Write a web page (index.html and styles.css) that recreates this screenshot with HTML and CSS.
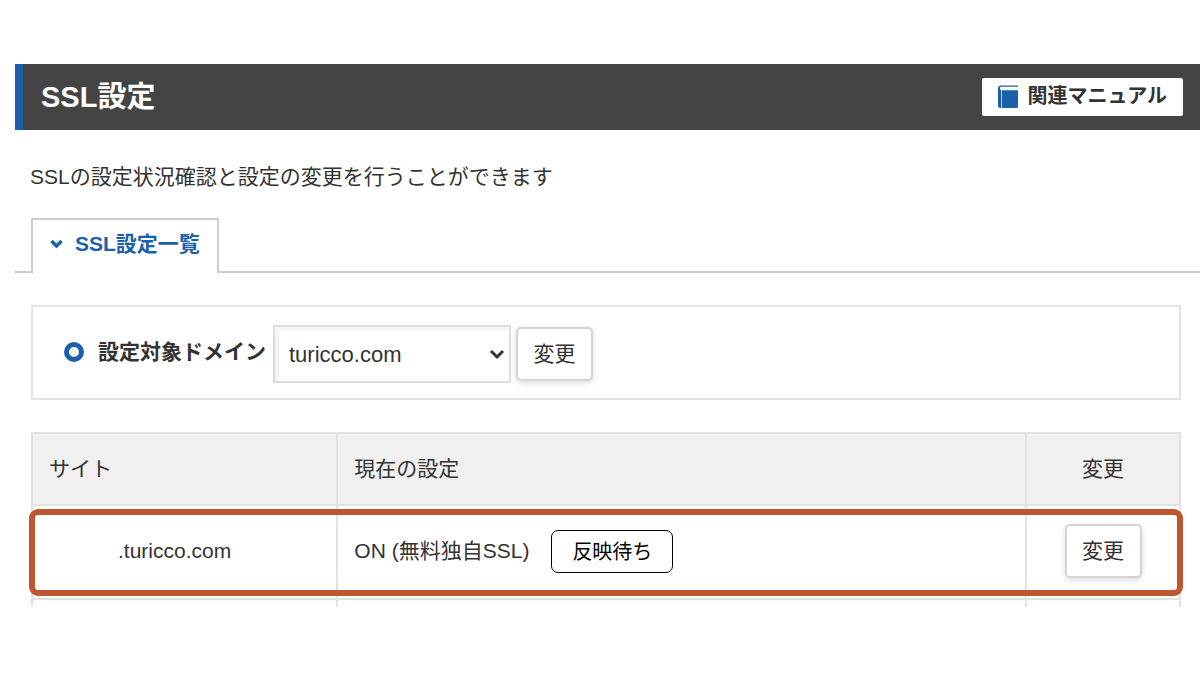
FILE: index.html
```html
<!DOCTYPE html>
<html lang="ja">
<head>
    <meta charset="UTF-8">
    <meta name="viewport" content="width=device-width, initial-scale=1.0">
    <title>SSL設定</title>
    <link rel="stylesheet" href="styles.css">
</head>
<body>
    <header class="page-header">
        <h1>SSL設定</h1>
        <a class="manual-link" href="#manual">
            <svg class="book-icon" width="20" height="24" viewBox="0 0 20 24" aria-hidden="true">
                <path fill="#1b60aa" d="M3 0.500h17v1.300H3.500a1.500 1.500 0 0 0-1 2.700L3 5.300h17V21.500a1.500 1.500 0 0 1-1.500 1.500H2.500A2.500 2.500 0 0 1 0 20.500V3.500a3 3 0 0 1 3-3z"/>
                <path stroke="#b9d0e8" stroke-width="1" d="M3.500 5v18" fill="none"/>
            </svg>
            関連マニュアル
        </a>
    </header>

    <main>
        <p class="description">SSLの設定状況確認と設定の変更を行うことができます</p>

        <nav class="tabs">
            <a class="tab" href="#list">
                <svg width="13" height="10" viewBox="0 0 13 10" aria-hidden="true">
                    <path d="M1.500 2l5 5 5-5" fill="none" stroke="#1b60aa" stroke-width="3.400"/>
                </svg>
                SSL設定一覧
            </a>
        </nav>

        <form class="domain-form">
            <label for="domain">設定対象ドメイン</label>
            <div class="select-wrap">
                <select id="domain">
                    <option>turicco.com</option>
                </select>
                <svg class="select-arrow" width="16" height="12" viewBox="0 0 16 12" aria-hidden="true">
                    <path d="M2 3l6 6 6-6" fill="none" stroke="#333" stroke-width="3"/>
                </svg>
            </div>
            <button type="button" class="btn">変更</button>
        </form>

        <div class="table-wrap" id="list">
            <table>
                <thead>
                    <tr>
                        <th class="col-site">サイト</th>
                        <th class="col-status">現在の設定</th>
                        <th class="col-action">変更</th>
                    </tr>
                </thead>
                <tbody>
                    <tr class="highlight">
                        <td class="site">.turicco.com</td>
                        <td>
                            <div class="status">
                                ON (無料独自SSL)
                                <span class="badge">反映待ち</span>
                            </div>
                        </td>
                        <td class="action"><button type="button" class="btn">変更</button></td>
                    </tr>
                    <tr class="next-row">
                        <td></td>
                        <td></td>
                        <td></td>
                    </tr>
                </tbody>
            </table>
        </div>
    </main>
</body>
</html>
```
FILE: styles.css
```css
*,
*::before,
*::after {
    box-sizing: border-box;
}

body {
    margin: 0;
    padding: 64px 0 0 15px;
    background: #fff;
    color: #333;
    font-family: "Liberation Sans", "Noto Sans CJK JP", sans-serif;
    font-size: 21px;
    line-height: 30px;
}

.page-header {
    display: flex;
    justify-content: space-between;
    align-items: center;
    height: 66px;
    padding: 0 17px 0 18px;
    border-left: 8px solid #1b60aa;
    background: #444;
}

h1 {
    margin: 0;
    color: #fff;
    font-size: 29px;
    line-height: 40px;
}

.manual-link {
    display: flex;
    align-items: center;
    gap: 10px;
    height: 38px;
    padding: 0 16px 2px;
    border-radius: 2px;
    background: #fff;
    color: #333;
    font-size: 20px;
    font-weight: bold;
    text-decoration: none;
}

.book-icon {
    margin-top: 2px;
}

.description {
    margin: 32px 16px 26px 15px;
}

.tabs {
    display: flex;
    padding-left: 16px;
    border-bottom: 2px solid #ccc;
}

.tab {
    display: flex;
    align-items: center;
    gap: 12px;
    height: 55px;
    margin-bottom: -2px;
    padding: 0 17px 5px;
    border: 2px solid #ccc;
    border-bottom: 0;
    background: #fff;
    color: #1b60aa;
    font-weight: bold;
    text-decoration: none;
}

.domain-form {
    display: flex;
    align-items: center;
    margin: 32px 19px 32px 16px;
    padding: 18px 31px 15px;
    border: 2px solid #e4e4e4;
}

.domain-form label {
    display: flex;
    align-items: center;
    gap: 14px;
    padding-bottom: 4px;
    font-weight: bold;
}

.domain-form label::before {
    content: "";
    width: 20px;
    height: 20px;
    border: 5px solid #1b60aa;
    border-radius: 50%;
}

.select-wrap {
    position: relative;
    margin: 0 5px 0 7px;
}

select {
    display: block;
    width: 238px;
    height: 58px;
    padding: 0 30px 0 14px;
    border: 2px solid #ddd;
    border-radius: 0;
    background: #fff;
    box-shadow: inset 4px 4px 0 #f5f5f5;
    color: #333;
    font-family: inherit;
    font-size: 22px;
    appearance: none;
}

.select-arrow {
    position: absolute;
    right: 6px;
    top: 23px;
    pointer-events: none;
}

.btn {
    width: 77px;
    height: 54px;
    padding: 0;
    border: 2px solid #d4d4d4;
    border-radius: 5px;
    background: #fff;
    box-shadow: 0 2px 6px rgba(0, 0, 0, 0.15);
    color: #333;
    font: inherit;
    cursor: pointer;
}

.table-wrap {
    margin: 0 19px 0 16px;
}

table {
    width: 100%;
    table-layout: fixed;
    border-collapse: collapse;
}

th,
td {
    padding: 0 16px;
    border: 2px solid #e2e2e2;
    text-align: left;
    font-weight: normal;
}

th {
    height: 72px;
    background: #f0f0f0;
}

.col-site {
    width: 26.6%;
}

.col-action {
    width: 13.4%;
}

th.col-action,
.action {
    text-align: center;
}

/* frame around the row that is waiting to be applied */
.highlight {
    position: relative;
    height: 94px;
}

.highlight td {
    padding-bottom: 2px;
}

.highlight .action::after {
    content: "";
    position: absolute;
    inset: 4px -3px 3px;
    border: 6px solid #bc5731;
    border-radius: 9px;
    pointer-events: none;
}

.site {
    padding-left: 85px;
}

.status {
    display: flex;
    align-items: center;
    gap: 22px;
}

.badge {
    padding: 5px 20px 6px;
    border: 1px solid #000;
    border-radius: 7px;
    color: #000;
    font-family: "Noto Sans CJK JP", sans-serif;
    font-size: 20px;
}

.next-row td {
    height: 8px;
    border-bottom: 0;
}
```
